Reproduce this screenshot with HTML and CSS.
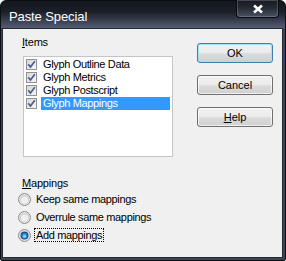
FILE: index.html
```html
<!DOCTYPE html>
<html lang="en">
<head>
    <meta charset="UTF-8">
    <title>Paste Special</title>
    <link rel="stylesheet" href="styles.css">
</head>
<body>
    <div class="window">
        <div class="titlebar">
            <span class="title">Paste Special</span>
            <div class="close-btn">
                <svg width="12" height="10" viewBox="0 0 12 10">
                    <path d="M2 1.5 L10 8.5 M10 1.5 L2 8.5" stroke="#fff" stroke-width="2.6" fill="none"/>
                </svg>
            </div>
        </div>

        <div class="client">
            <div class="left-col">
                <div class="group-label"><u>I</u>tems</div>
                <div class="listbox">
                    <div class="list-row">
                        <span class="check"><svg width="9" height="9" viewBox="0 0 9 9"><path d="M1.3 4.3 L3.4 7 L7.8 1.3" stroke="#4b5f8c" stroke-width="1.7" fill="none"/></svg></span>
                        <span class="item-text">Glyph Outline Data</span>
                    </div>
                    <div class="list-row">
                        <span class="check"><svg width="9" height="9" viewBox="0 0 9 9"><path d="M1.3 4.3 L3.4 7 L7.8 1.3" stroke="#4b5f8c" stroke-width="1.7" fill="none"/></svg></span>
                        <span class="item-text">Glyph Metrics</span>
                    </div>
                    <div class="list-row">
                        <span class="check"><svg width="9" height="9" viewBox="0 0 9 9"><path d="M1.3 4.3 L3.4 7 L7.8 1.3" stroke="#4b5f8c" stroke-width="1.7" fill="none"/></svg></span>
                        <span class="item-text">Glyph Postscript</span>
                    </div>
                    <div class="list-row">
                        <span class="check"><svg width="9" height="9" viewBox="0 0 9 9"><path d="M1.3 4.3 L3.4 7 L7.8 1.3" stroke="#4b5f8c" stroke-width="1.7" fill="none"/></svg></span>
                        <span class="item-text selected">Glyph Mappings</span>
                    </div>
                </div>

                <div class="group-label mappings-label"><u>M</u>appings</div>
                <div class="radio-row">
                    <svg class="radio" width="13" height="13" viewBox="0 0 13 13">
                        <circle cx="6.5" cy="6.5" r="6" fill="#e4e4e4" stroke="#8c8c8c"/>
                        <circle cx="6.5" cy="6.5" r="4.5" fill="#d2d2d2"/>
                        <circle cx="6.5" cy="7" r="3.5" fill="#f0f0f0"/>
                    </svg>
                    <span class="radio-text">Keep same mappings</span>
                </div>
                <div class="radio-row">
                    <svg class="radio" width="13" height="13" viewBox="0 0 13 13">
                        <circle cx="6.5" cy="6.5" r="6" fill="#e4e4e4" stroke="#8c8c8c"/>
                        <circle cx="6.5" cy="6.5" r="4.5" fill="#d2d2d2"/>
                        <circle cx="6.5" cy="7" r="3.5" fill="#f0f0f0"/>
                    </svg>
                    <span class="radio-text">Overrule same mappings</span>
                </div>
                <div class="radio-row">
                    <svg class="radio" width="13" height="13" viewBox="0 0 13 13">
                        <circle cx="6.5" cy="6.5" r="6" fill="#e4e4e4" stroke="#8c8c8c"/>
                        <circle cx="6.5" cy="6.5" r="4" fill="#1d4f86"/>
                        <circle cx="6.5" cy="6.8" r="2.8" fill="#2f8fd8"/>
                        <circle cx="6.5" cy="7.3" r="1.5" fill="#8ad6ff"/>
                    </svg>
                    <span class="radio-text focused">Add mappings</span>
                </div>
            </div>

            <div class="right-col">
                <button class="btn default">OK</button>
                <button class="btn">Cancel</button>
                <button class="btn"><u>H</u>elp</button>
            </div>
        </div>
    </div>
</body>
</html>
```

FILE: styles.css
```css
body {
    margin: 0;
    font-family: 'Liberation Sans', Arial, sans-serif;
    font-size: 11px;
    color: #000;
    background: #fff;
}

.window {
    width: 286px;
    height: 261px;
    box-sizing: border-box;
    border: 1px solid #0c0e13;
    border-radius: 6px 6px 2px 2px;
    background: linear-gradient(to bottom, #14171e 0, #1b1f28 11px, #545c75 27px, #3d4457 28px, #3d4457 100%);
    display: flex;
    flex-direction: column;
}

.titlebar {
    height: 28px;
    display: flex;
    align-items: flex-start;
}

.title {
    color: #fff;
    font-size: 13px;
    padding: 8px 0 0 8px;
    letter-spacing: -0.1px;
}

.close-btn {
    margin-left: auto;
    margin-right: 6px;
    margin-top: -1px;
    width: 43px;
    height: 18px;
    box-sizing: border-box;
    border: 1px solid #0a0b0f;
    border-top: none;
    border-radius: 0 0 4px 4px;
    background: linear-gradient(to bottom, #17191f 0, #262a34 8px, #4b5266 100%);
    box-shadow: inset 0 0 0 1px rgba(150, 160, 185, 0.35);
    display: flex;
    align-items: center;
    justify-content: center;
}

.client {
    flex: 1;
    margin: 0 3px 3px 2px;
    background: #f0f0f0;
    box-shadow: 0 0 0 1px #262b38;
    display: flex;
    justify-content: space-between;
    padding: 6px 9px 0 15px;
}

.left-col {
    display: flex;
    flex-direction: column;
}

.group-label {
    line-height: 14px;
    padding-left: 4px;
    letter-spacing: -0.2px;
}

.listbox {
    margin: 7px 0 0 5px;
    width: 150px;
    height: 101px;
    box-sizing: border-box;
    border: 1px solid #c3c5cb;
    background: #fff;
    padding: 1px 2px 0 2px;
}

.list-row {
    height: 13px;
    display: flex;
    align-items: center;
}

.check {
    width: 11px;
    height: 11px;
    box-sizing: border-box;
    border: 1px solid #909090;
    background: linear-gradient(to bottom right, #d8d8d8, #f6f6f6);
    margin: 0 4px 0 0;
    display: flex;
    align-items: center;
    justify-content: center;
}

.item-text {
    flex: 1;
    line-height: 13px;
    padding-left: 2px;
    letter-spacing: -0.35px;
}

.item-text.selected {
    background: #3399ff;
    color: #fff;
}

.mappings-label {
    margin-top: 20px;
    line-height: 13px;
}

.radio-row {
    height: 18px;
    display: flex;
    align-items: center;
}

.radio {
    margin-right: 3px;
}

.radio-text {
    line-height: 12px;
    padding: 0 1px;
    border: 1px solid transparent;
    letter-spacing: -0.35px;
}

.radio-text.focused {
    border: 1px dotted #000;
}

.right-col {
    display: flex;
    flex-direction: column;
    gap: 12px;
    padding-top: 8px;
}

.btn {
    width: 76px;
    height: 20px;
    font-family: inherit;
    font-size: 11px;
    color: #000;
    border: 1px solid #707070;
    border-radius: 3px;
    background: linear-gradient(to bottom, #f2f2f2 0, #ebebeb 50%, #dddddd 51%, #cfcfcf 100%);
    box-shadow: inset 0 0 0 1px rgba(255, 255, 255, 0.7);
    padding: 0;
}

.btn.default {
    border-color: #3c7fb1;
    box-shadow: inset 0 0 0 1px #9ee3f5;
}
```
